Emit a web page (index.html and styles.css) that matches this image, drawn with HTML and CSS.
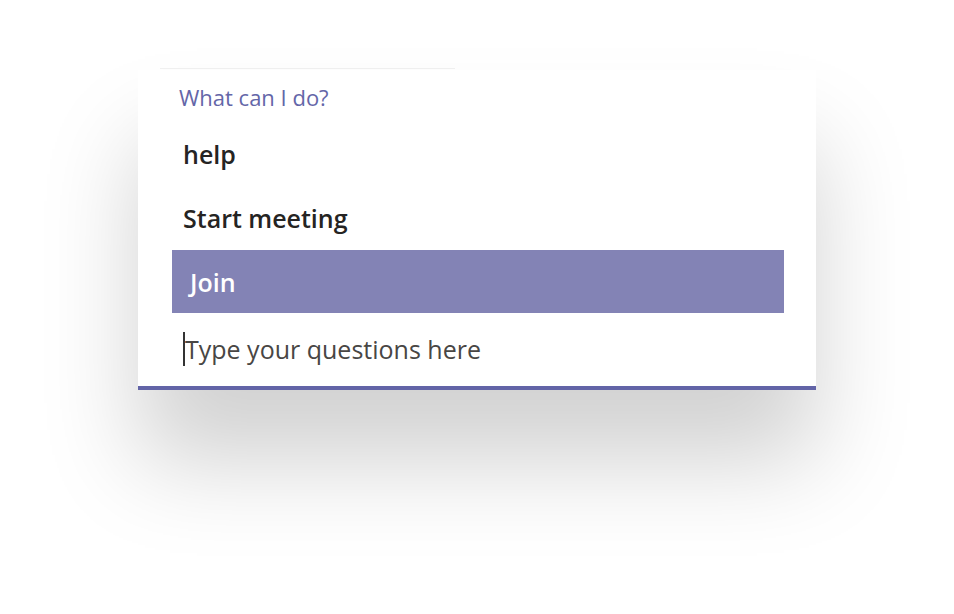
FILE: index.html
```html
<!DOCTYPE html>
<html lang="en">
<head>
<meta charset="utf-8">
<title>What can I do?</title>
<link rel="stylesheet" href="styles.css">
</head>
<body>
<div class="stage">
  <div class="topline"></div>
  <div class="card">
    <div class="heading">What can I do?</div>
    <ul class="list">
      <li class="item">help</li>
      <li class="item">Start meeting</li>
      <li class="item selected">Join</li>
    </ul>
    <div class="input">
      <span class="caret"></span><span class="placeholder">Type your questions here</span>
    </div>
  </div>
</div>
</body>
</html>
```

FILE: styles.css
```css
html, body {
  margin: 0;
  padding: 0;
  background: #ffffff;
}

body {
  font-family: "Open Sans", "Noto Sans", "Liberation Sans", sans-serif;
  width: 954px;
  height: 614px;
  overflow: hidden;
}

.stage {
  padding-top: 68px;
  padding-left: 138px;
}

.topline {
  margin-left: 22px;
  width: 295px;
  height: 1px;
  background: #f1f1f1;
  margin-bottom: 1px;
}

.card {
  width: 678px;
  background: #ffffff;
  border-bottom: 4px solid #6264a7;
  box-shadow: 0 72px 90px rgba(0, 0, 0, 0.18);
  box-sizing: border-box;
  padding: 12px 32px 0 34px;
}

.heading {
  color: #6466a8;
  font-size: 22px;
  line-height: 30px;
  padding-left: 7px;
  margin-bottom: 10px;
}

.list {
  list-style: none;
  margin: 0;
  padding: 0;
}

.item {
  font-size: 25px;
  font-weight: 600;
  color: #252423;
  padding-left: 11px;
  height: 64px;
  display: flex;
  align-items: center;
}

.item.selected {
  background: #8383b5;
  color: #ffffff;
  padding-left: 18px;
  height: 63px;
}

.input {
  display: flex;
  align-items: center;
  height: 73px;
  padding-left: 11px;
  padding-bottom: 2px;
  box-sizing: border-box;
}

.caret {
  width: 2px;
  height: 34px;
  background: #333333;
}

.placeholder {
  font-size: 25px;
  color: #484644;
}
```
